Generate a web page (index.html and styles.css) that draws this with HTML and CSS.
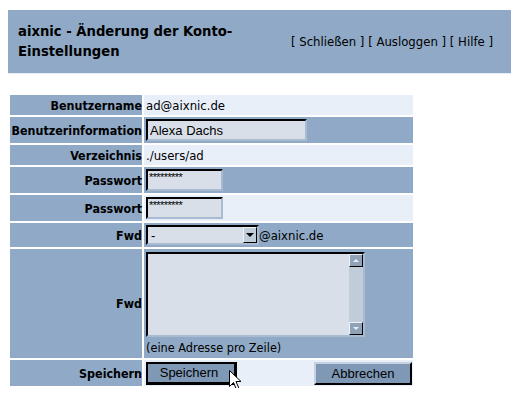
FILE: index.html
```html
<!DOCTYPE html>
<html lang="de">
<head>
    <meta charset="UTF-8">
    <title>aixnic - Änderung der Konto-Einstellungen</title>
    <link rel="stylesheet" href="styles.css">
</head>
<body>
    <div class="header">
        <h1 class="title">aixnic - Änderung der Konto-Einstellungen</h1>
        <div class="links">
            [ <a href="#">Schließen</a> ] [ <a href="#">Ausloggen</a> ] [ <a href="#">Hilfe</a> ]
        </div>
    </div>

    <form>
        <table class="account">
            <tr class="row-text">
                <th>Benutzername</th>
                <td class="light">ad@aixnic.de</td>
            </tr>
            <tr class="row-input">
                <th>Benutzerinformation</th>
                <td><input type="text" class="field field-info" value="Alexa Dachs"></td>
            </tr>
            <tr class="row-text">
                <th>Verzeichnis</th>
                <td class="light">./users/ad</td>
            </tr>
            <tr class="row-input">
                <th>Passwort</th>
                <td><input type="text" class="field field-pass" value="*********"></td>
            </tr>
            <tr class="row-input">
                <th>Passwort</th>
                <td class="light"><input type="text" class="field field-pass" value="*********"></td>
            </tr>
            <tr class="row-select">
                <th>Fwd</th>
                <td>
                    <div class="fwd-line">
                        <div class="select-box">
                            <select class="select">
                                <option>-</option>
                            </select>
                            <span class="select-arrow"><span class="tri-down"></span></span>
                        </div>
                        <span>@aixnic.de</span>
                    </div>
                </td>
            </tr>
            <tr class="row-area">
                <th>Fwd</th>
                <td>
                    <div class="area-box">
                        <textarea class="area"></textarea>
                        <div class="scrollbar">
                            <span class="scroll-btn"><span class="tri-up"></span></span>
                            <span class="scroll-track"></span>
                            <span class="scroll-btn"><span class="tri-down small"></span></span>
                        </div>
                    </div>
                    <div class="hint">(eine Adresse pro Zeile)</div>
                </td>
            </tr>
            <tr class="row-buttons">
                <th>Speichern</th>
                <td class="light">
                    <div class="buttons">
                        <button type="button" class="btn btn-focus">Speichern</button>
                        <button type="button" class="btn">Abbrechen</button>
                    </div>
                    <!-- mouse pointer sitting on the save button -->
                    <svg class="cursor" width="13" height="21" viewBox="0 0 13 21">
                        <path d="M0.5 0.5 L0.5 16.5 L4.5 12.5 L7.5 19.5 L10 18.5 L7 11.5 L12 11.5 Z" fill="#fff" stroke="#000" stroke-width="1"/>
                    </svg>
                </td>
            </tr>
        </table>
    </form>
</body>
</html>
```

FILE: styles.css
```css
body {
    margin: 8px;
    background-color: #fff;
    font-family: 'DejaVu Sans Condensed', 'DejaVu Sans', sans-serif;
    font-size: 12px;
    color: #000;
}

.header {
    margin-top: 2px;
    height: 64px;
    width: 503px;
    background-color: #8fa9c6;
    border-bottom: 1px solid #e4ecf7;
    display: flex;
    align-items: center;
    justify-content: space-between;
    padding: 0 18px 0 10px;
    box-sizing: border-box;
}

.title {
    margin: 0;
    width: 245px;
    font-family: 'DejaVu Sans', sans-serif;
    font-size: 13.2px;
    line-height: 20px;
    font-weight: bold;
}

.links {
    font-size: 13px;
}

.links a {
    color: #000;
    text-decoration: none;
}

form {
    margin-top: 19px;
}

.account {
    border-spacing: 2px;
    width: 407px;
}

.account th {
    width: 132px;
    padding: 0;
    text-align: right;
    background-color: #8fa9c6;
    font-size: 12.4px;
    font-weight: bold;
    white-space: nowrap;
}

.account td {
    padding: 0 0 0 2px;
    background-color: #8fa9c6;
    vertical-align: middle;
    font-size: 13px;
}

.account td.light {
    background-color: #e9eff9;
}

.row-text th,
.row-text td {
    height: 20px;
}

.row-input th,
.row-input td,
.row-buttons th,
.row-buttons td {
    height: 26px;
}

.row-select th,
.row-select td {
    height: 24px;
}

.row-area td {
    height: 109px;
}

.field {
    display: block;
    box-sizing: border-box;
    height: 22px;
    margin: 0;
    padding: 1px 2px 0;
    background-color: #d8dfe9;
    border: 2px solid;
    border-color: #000 #a9bbd1 #a9bbd1 #000;
    font-family: 'Liberation Sans', Arial, sans-serif;
    font-size: 13px;
    outline: none;
}

.field-info {
    width: 161px;
}

.field-pass {
    width: 77px;
    font-size: 11px;
    letter-spacing: -0.6px;
    padding: 0 1px 7px;
}

.fwd-line {
    display: flex;
    align-items: center;
}

.select-box {
    display: flex;
    width: 113px;
    height: 20px;
    box-sizing: border-box;
    border: 2px solid;
    border-color: #000 #a9bbd1 #a9bbd1 #000;
    background-color: #d8dfe9;
}

.select {
    flex: 1;
    min-width: 0;
    appearance: none;
    border: none;
    background: transparent;
    padding: 0 3px;
    font-family: 'Liberation Sans', Arial, sans-serif;
    font-size: 13px;
    outline: none;
}

.select-arrow {
    width: 12px;
    background-color: #c1ccd9;
    border: 1px solid;
    border-color: #eef2f7 #000 #000 #eef2f7;
    display: flex;
    align-items: center;
    justify-content: center;
}

.tri-down {
    width: 0;
    height: 0;
    border-left: 4px solid transparent;
    border-right: 4px solid transparent;
    border-top: 4px solid #000;
}

.tri-down.small {
    border-left-width: 3px;
    border-right-width: 3px;
    border-top: 3px solid #e9eff9;
}

.tri-up {
    width: 0;
    height: 0;
    border-left: 3px solid transparent;
    border-right: 3px solid transparent;
    border-bottom: 3px solid #e9eff9;
}

.area-box {
    display: flex;
    width: 219px;
    height: 85px;
    box-sizing: border-box;
    border: 2px solid;
    border-color: #000 #a9bbd1 #a9bbd1 #000;
    background-color: #d8dfe9;
}

.area {
    flex: 1;
    resize: none;
    border: none;
    background: transparent;
    outline: none;
    overflow: hidden;
}

.scrollbar {
    width: 14px;
    display: flex;
    flex-direction: column;
    background-color: #c1ccd9;
}

.scroll-btn {
    height: 13px;
    box-sizing: border-box;
    border: 1px solid;
    border-color: #eef2f7 #000 #000 #eef2f7;
    background-color: #8fa2b8;
    display: flex;
    align-items: center;
    justify-content: center;
}

.scroll-track {
    flex: 1;
}

.hint {
    margin-top: 4px;
    font-size: 12.6px;
    line-height: 14px;
}

.row-buttons td {
    position: relative;
}

.buttons {
    display: flex;
    justify-content: space-between;
    padding-right: 1px;
}

.btn {
    height: 23px;
    box-sizing: border-box;
    background-color: #7f98b5;
    border: 2px solid;
    border-color: #c5d2e2 #000 #000 #c5d2e2;
    font-family: 'Liberation Sans', Arial, sans-serif;
    font-size: 13px;
    color: #000;
    padding: 0 10px;
}

.btn-focus {
    width: 91px;
    border-color: #000;
    border-width: 2px 3px 3px 2px;
    padding-right: 14px;
}

.btn + .btn {
    width: 98px;
}

.cursor {
    position: absolute;
    left: 85px;
    top: 10px;
}
```
